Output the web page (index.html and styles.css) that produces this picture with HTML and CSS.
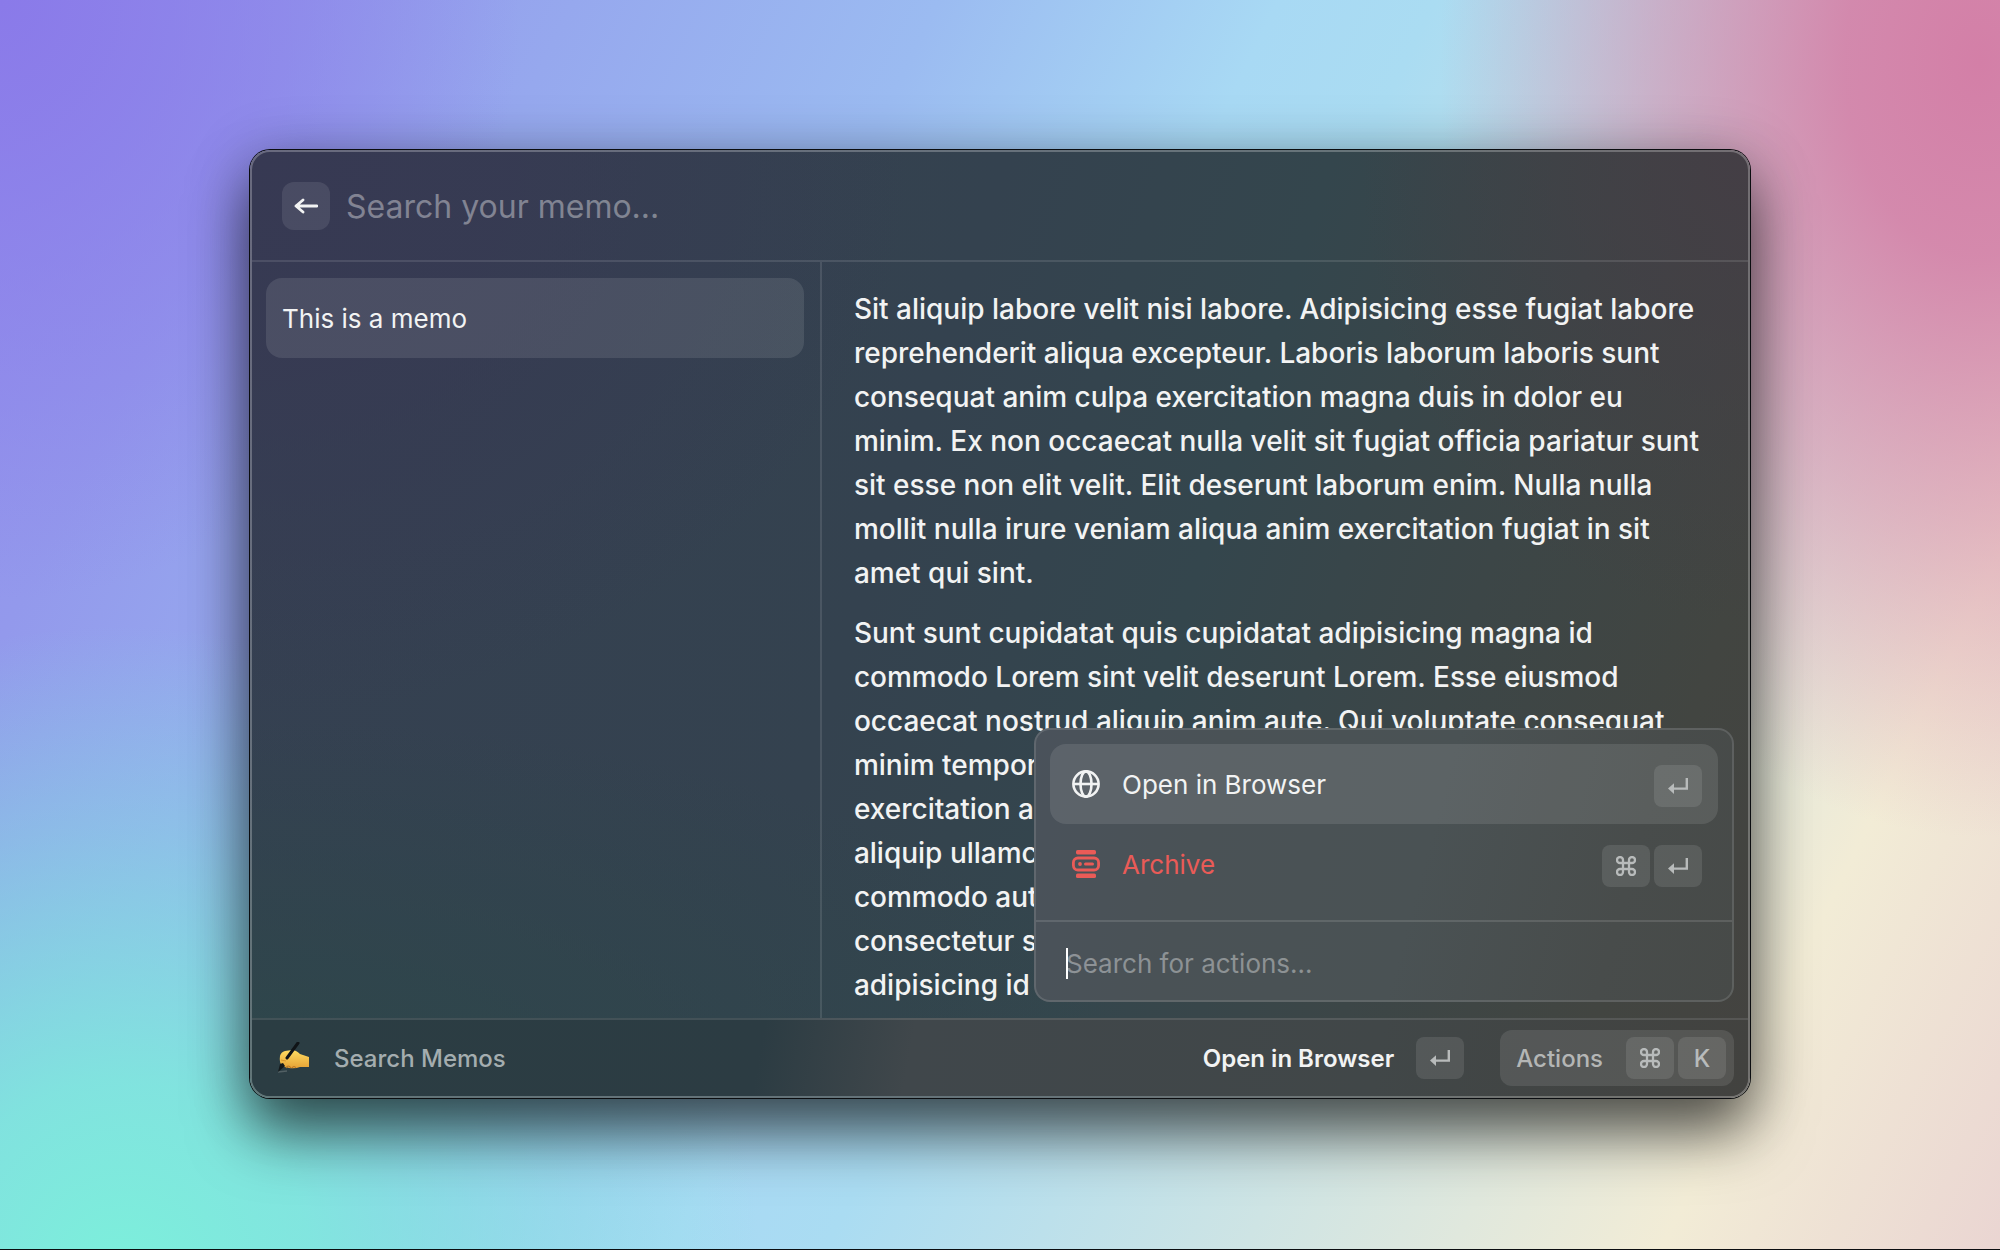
FILE: index.html
```html
<!DOCTYPE html>
<html lang="en">
<head>
<meta charset="utf-8">
<meta name="viewport" content="width=device-width, initial-scale=1">
<title>Search Memos</title>
<link rel="stylesheet" href="styles.css">
</head>
<body>
<svg class="sprite" aria-hidden="true">
  <symbol id="return" viewBox="0 0 20 16">
    <path d="M18.800 0V10.600H4" fill="none" stroke="currentColor" stroke-width="2.400"/>
    <path d="M6 5.200V16L0 10.600Z" fill="currentColor"/>
  </symbol>
  <symbol id="command" viewBox="0 0 20 20">
    <path d="M7 7V4A3 3 0 1 0 4 7H16A3 3 0 1 0 13 4V16A3 3 0 1 0 16 13H4A3 3 0 1 0 7 16Z" fill="none" stroke="currentColor" stroke-width="2.300"/>
  </symbol>
</svg>
<main class="window">
  <header class="header">
    <button class="back" type="button" aria-label="Back">
      <svg width="24" height="16" viewBox="0 0 24 16"><path d="M23 8H2M9 2L2 8L9 14" fill="none" stroke="currentColor" stroke-width="2.800" stroke-linecap="round" stroke-linejoin="round"/></svg>
    </button>
    <input class="search" type="text" placeholder="Search your memo..." aria-label="Search your memo">
  </header>
  <div class="content">
    <nav class="list" aria-label="Memos">
      <button class="memo" type="button">This is a memo</button>
    </nav>
    <article class="detail">
      <p>Sit aliquip labore velit nisi labore. Adipisicing esse fugiat labore<br>reprehenderit aliqua excepteur. Laboris laborum laboris sunt<br>consequat anim culpa exercitation magna duis in dolor eu<br>minim. Ex non occaecat nulla velit sit fugiat officia pariatur sunt<br>sit esse non elit velit. Elit deserunt laborum enim. Nulla nulla<br>mollit nulla irure veniam aliqua anim exercitation fugiat in sit<br>amet qui sint.</p>
      <p>Sunt sunt cupidatat quis cupidatat adipisicing magna id<br>commodo Lorem sint velit deserunt Lorem. Esse eiusmod<br>occaecat nostrud aliquip anim aute. Qui voluptate consequat<br>minim tempor<br>exercitation a<br>aliquip ullamc<br>commodo aut<br>consectetur s<br>adipisicing id</p>
    </article>
    <section class="popup" aria-label="Actions">
      <div class="actions">
        <button class="action selected" type="button">
          <svg width="28" height="28" viewBox="0 0 28 28" fill="none" stroke="currentColor" stroke-width="2.600"><circle cx="14" cy="14" r="12.600"/><ellipse cx="14" cy="14" rx="5.500" ry="12.600"/><path d="M1 14H27"/></svg>
          <span class="label">Open in Browser</span>
          <kbd class="key"><svg width="20" height="16"><use href="#return"/></svg></kbd>
        </button>
        <button class="action danger" type="button">
          <svg width="28" height="28" viewBox="0 0 28 28"><rect x="4" y="0" width="20" height="4.400" rx="1.600" fill="currentColor"/><rect x="4" y="23.600" width="20" height="4.400" rx="1.600" fill="currentColor"/><rect x="1.400" y="8" width="25.200" height="12" rx="4.500" fill="none" stroke="currentColor" stroke-width="2.800"/><circle cx="8" cy="14" r="1.900" fill="currentColor"/><rect x="12" y="12.500" width="10" height="3" rx="1.500" fill="currentColor"/></svg>
          <span class="label">Archive</span>
          <kbd class="key"><svg width="20" height="20"><use href="#command"/></svg></kbd>
          <kbd class="key"><svg width="20" height="16"><use href="#return"/></svg></kbd>
        </button>
      </div>
      <div class="filter">
        <span class="caret"></span>
        <input class="filter-input" type="text" placeholder="Search for actions..." aria-label="Search for actions">
      </div>
    </section>
  </div>
  <footer class="footer">
    <svg class="hand" width="32" height="32" viewBox="0 0 32 32">
      <defs><linearGradient id="skin" x1="0" y1="0" x2="0" y2="1"><stop offset="0" stop-color="#ffdc62"/><stop offset="1" stop-color="#e5a235"/></linearGradient></defs>
      <path d="M0 30L9 29" stroke="#526064" stroke-width="1.500"/>
      <path d="M2 14Q3 10 7 9L14 8Q18 8 22 12L31 15V25L22 25Q17 27 11 26L4 24Q1 20 2 14Z" fill="url(#skin)"/>
      <path d="M8 26Q10 22 13 26M14 26Q16 23 18 26" fill="none" stroke="#bd7724" stroke-width="1.200"/>
      <path d="M9 16L20 1" stroke="#101417" stroke-width="3" stroke-linecap="round"/>
      <path d="M3 18L8 19" stroke="#d9962f" stroke-width="1"/>
      <path d="M0 30L2 22L5 21L7 24Z" fill="#14191b"/>
    </svg>
    <span class="title">Search Memos</span>
    <button class="primary" type="button">Open in Browser <kbd class="key"><svg width="20" height="16"><use href="#return"/></svg></kbd></button>
    <button class="more" type="button"><span class="more-label">Actions</span><kbd class="key"><svg width="20" height="20"><use href="#command"/></svg></kbd><kbd class="key">K</kbd></button>
  </footer>
</main>
</body>
</html>
```
FILE: styles.css
```css
* { box-sizing: border-box; }

body {
  margin: 0;
  min-height: 100vh;
  padding: 150px 250px;
  font-family: Inter, "Liberation Sans", sans-serif;
  color: #f2f3f3;
  border-bottom: 1px solid #0b0d10;
  background:
    radial-gradient(ellipse 27% 62% at 99% 5%, #d37fa7 0%, #d37fa7e6 25%, #d37fa780 60%, #d37fa700 100%),
    radial-gradient(ellipse 32% 52% at 6% 102%, #7cefdb 0%, #7cefdbd0 30%, #7cefdb58 68%, #7cefdb00 100%),
    radial-gradient(ellipse 26% 48% at 0% 0%, #8a7ae9 0%, #8a7ae900 100%),
    linear-gradient(116deg, #928fec 0%, #9399ec 12%, #96a8ee 22%, #9bbbf1 36%, #a8d9f4 49%, #aadcf2 55%, #f2ecd6 87%, #ead5d2 100%);
}

button,
input {
  margin: 0;
  padding: 0;
  border: 0;
  background: none;
  color: inherit;
  font: inherit;
  outline: 0;
}

input::placeholder { color: inherit; opacity: 1; }

.sprite { position: absolute; width: 0; height: 0; }

.window {
  display: flex;
  flex-direction: column;
  border: 2px solid #ffffff40;
  border-radius: 20px;
  overflow: hidden;
  background:
    radial-gradient(ellipse 26% 50% at 100% 0%, #443e45 0%, #443e4500 100%),
    radial-gradient(ellipse 44% 60% at 0% 0%, #373953 0%, #373953c0 40%, #37395300 100%),
    radial-gradient(ellipse 60% 40% at 0% 100%, #2d474a 0%, #2d474a00 100%),
    linear-gradient(108deg, #354052 0%, #34424f 42%, #34464d 60%, #3c4647 76%, #424541 90%, #444340 100%);
  background-origin: border-box;
  box-shadow: 0 0 0 1px #0b0d10, 0 36px 60px #00000090, 0 8px 60px #00000048;
}

.header {
  display: flex;
  align-items: center;
  gap: 16px;
  height: 110px;
  padding: 0 30px;
  border-bottom: 2px solid #ffffff1c;
}

.back {
  display: grid;
  place-items: center;
  width: 48px;
  height: 48px;
  border-radius: 12px;
  background: #ffffff18;
}

.search {
  flex: 1;
  padding-top: 2px;
  font-size: 32px;
  line-height: 48px;
  color: #ffffff60;
}

.content {
  position: relative;
  display: grid;
  grid-template-columns: minmax(0, 8fr) minmax(0, 13fr);
}

.list {
  padding: 16px 16px 16px 14px;
  border-right: 2px solid #ffffff1c;
}

.memo {
  width: 100%;
  height: 80px;
  padding: 0 16px;
  border-radius: 16px;
  background: #ffffff1a;
  font-size: 26px;
  text-align: left;
}

.detail {
  padding: 25px 32px 11px;
  font-size: 28px;
  font-weight: 500;
  line-height: 44px;
  white-space: nowrap;
}

.detail p { margin: 0 0 16px; }
.detail p:last-child { margin: 0; }

.popup {
  position: absolute;
  right: 14px;
  bottom: 16px;
  width: 700px;
  border: 2px solid #ffffff1f;
  border-radius: 16px;
  background: linear-gradient(105deg, #4a525b 0%, #4a5256 25%, #4a5254 55%, #484c4b 82%, #474a48 100%);
  background-origin: border-box;
  font-size: 26px;
}

.actions { padding: 14px 14px 16px; }

.action {
  display: flex;
  align-items: center;
  gap: 4px;
  width: 100%;
  height: 80px;
  padding: 0 16px 0 22px;
  border-radius: 16px;
  text-align: left;
}

.action.selected { background: #ffffff1a; }
.danger { color: #ea5b57; }
.label { flex: 1; padding-left: 18px; }

.key {
  display: grid;
  place-items: center;
  width: 48px;
  height: 42px;
  border-radius: 8px;
  background: #ffffff1a;
  color: #b8bbbb;
  font: 500 24px Inter, sans-serif;
}

.action .key { margin-top: 4px; }

.filter {
  position: relative;
  height: 80px;
  padding: 0 30px;
  border-top: 2px solid #ffffff1f;
  color: #ffffff60;
}

.filter-input { width: 100%; height: 100%; padding-top: 4px; }

.caret {
  position: absolute;
  top: 26px;
  left: 30px;
  width: 2px;
  height: 31px;
  background: #ffffff;
}

.footer {
  display: flex;
  align-items: center;
  height: 78px;
  padding: 0 14px 0 26px;
  border-top: 2px solid #ffffff1c;
  background: linear-gradient(100deg, #2b3d43 0%, #2c3c43 34%, #40474b 44%, #414748 75%, #42423f 100%);
  font-size: 24px;
  font-weight: 500;
}

.title { flex: 1; padding-left: 24px; color: #a4adaf; }

.primary,
.more { display: flex; align-items: center; }

.primary { gap: 22px; margin-right: 36px; font-weight: 600; }

.more {
  gap: 4px;
  height: 56px;
  padding: 0 8px 0 16px;
  border-radius: 12px;
  background: #ffffff1a;
  color: #b4b6b5;
}

.more-label { padding-right: 19px; }
```
